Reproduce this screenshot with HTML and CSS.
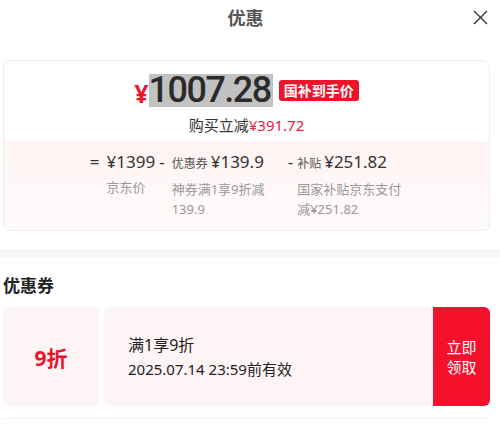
FILE: index.html
```html
<!DOCTYPE html>
<html lang="zh-CN">

<head>
  <meta charset="utf-8">
  <title>优惠</title>
  <link rel="stylesheet" href="styles.css">
</head>

<body>
  <div class="sheet">
    <div class="sheet-head">
      <span></span>
      <h1>优惠</h1>
      <button type="button" class="btn-close" aria-label="关闭">
        <svg width="15" height="15" viewBox="0 0 15 15">
          <path d="M1 1 L14 14 M14 1 L1 14" stroke="#333" stroke-width="1.4" fill="none" />
        </svg>
      </button>
    </div>

    <div class="price-card">
      <div class="price-top">
        <div class="price-line">
          <span class="yen">¥</span><span class="final">1007.28</span>
          <span class="badge">国补到手价</span>
        </div>
        <div class="save">购买立减<em>¥391.72</em></div>
      </div>
      <div class="price-calc">
        <div class="calc-col">
          <span class="op">=</span>
          <div class="calc-body">
            <div class="calc-price">¥1399</div>
            <div class="calc-desc">京东价</div>
          </div>
        </div>
        <div class="calc-col">
          <span class="op">-</span>
          <div class="calc-body w-coupon">
            <div class="calc-price"><small>优惠券</small>¥139.9</div>
            <div class="calc-desc">神券满1享9折减139.9</div>
          </div>
        </div>
        <div class="calc-col">
          <span class="op op-last">-</span>
          <div class="calc-body w-subsidy">
            <div class="calc-price"><small>补贴</small>¥251.82</div>
            <div class="calc-desc">国家补贴京东支付减¥251.82</div>
          </div>
        </div>
      </div>
    </div>
  </div>

  <div class="band"></div>

  <div class="sheet">
    <h2 class="sec-title">优惠券</h2>
    <div class="coupon">
      <div class="coupon-value">9折</div>
      <div class="coupon-info">
        <div class="coupon-name">满1享9折</div>
        <div>2025.07.14 23:59前有效</div>
      </div>
      <button type="button" class="coupon-btn">立即<br>领取</button>
    </div>
    <div class="divider"></div>
  </div>
</body>

</html>
```

FILE: styles.css
```css
html,
body {
  margin: 0;
  padding: 0;
  background: #fff;
}

body {
  font-family: "Noto Sans", "Noto Sans CJK SC", sans-serif;
  color: #333;
}

h1,
h2 {
  margin: 0;
}

button {
  font-family: inherit;
  border: none;
  cursor: pointer;
}

.sheet {
  padding: 0 10px 0 3px;
}

.sheet-head {
  display: grid;
  grid-template-columns: 1fr auto 1fr;
  align-items: center;
  height: 35px;
  margin-bottom: 25px;
  padding-right: 2px;
}

.sheet-head h1 {
  font-size: 18px;
  line-height: 24px;
  color: #555;
}

.btn-close {
  justify-self: end;
  background: none;
  padding: 0;
  width: 15px;
  height: 15px;
  line-height: 0;
}

/* 가격 카드 */
.price-card {
  border: 1px solid #eee;
  border-radius: 7px;
  overflow: hidden;
}

.price-top {
  padding: 12px 0 4px;
  text-align: center;
}

.price-line {
  display: flex;
  justify-content: center;
  align-items: center;
  height: 34px;
}

.yen {
  color: #f0142d;
  font-size: 25px;
  font-weight: 700;
  padding-top: 6px;
}

.final {
  display: inline-block;
  height: 33px;
  line-height: 33px;
  background: #c2c2c2;
  font-family: Roboto, "Noto Sans", sans-serif;
  font-size: 36px;
  font-weight: 500;
  letter-spacing: -1.5px;
  color: #2b2b2b;
  padding-right: 2px;
}

.badge {
  margin-left: 6px;
  background: #f0142a;
  color: #fff;
  font-size: 14px;
  font-weight: 700;
  line-height: 21px;
  padding: 0 5px;
  border-radius: 3px;
}

.save {
  margin-top: 6px;
  font-size: 15px;
  line-height: 24px;
}

.save em {
  font-style: normal;
  color: #e8213b;
}

.price-calc {
  display: flex;
  justify-content: center;
  gap: 4px;
  padding: 11px 0 11px 4px;
  background: linear-gradient(#fff4f4, #fffbfb);
}

.calc-col {
  display: flex;
}

.op {
  font-size: 17px;
  line-height: 20px;
  margin-right: 7px;
}

.op-last {
  margin-right: 4px;
}

.calc-price {
  font-size: 17px;
  line-height: 20px;
  white-space: nowrap;
}

.calc-price small {
  font-size: 12px;
  color: #555;
  margin-right: 3px;
}

.calc-desc {
  margin-top: 5px;
  font-size: 13px;
  line-height: 20px;
  color: #999;
}

.w-coupon {
  width: 112px;
}

.w-subsidy {
  width: 110px;
}

.band {
  height: 9px;
  margin-top: 18px;
  background: #f7f7fa;
}

.sec-title {
  margin-top: 16px;
  font-size: 17px;
  line-height: 24px;
  color: #222;
}

/* 쿠폰 */
.coupon {
  display: flex;
  height: 99px;
  margin-top: 9px;
  gap: 5px;
}

.coupon-value {
  width: 96px;
  display: flex;
  align-items: center;
  justify-content: center;
  background: #fdf4f5;
  border-radius: 6px;
  color: #e8152f;
  font-size: 21px;
  font-weight: 700;
}

.coupon-info {
  flex: 1;
  display: flex;
  flex-direction: column;
  justify-content: center;
  padding-left: 24px;
  background: #fdf4f5;
  border-radius: 6px 0 0 6px;
  font-size: 15px;
  line-height: 24px;
  color: #222;
}

.coupon-name {
  font-size: 16px;
}

.coupon-btn {
  width: 57px;
  margin-left: -5px;
  background: #f5102b;
  color: #fff;
  font-size: 15px;
  line-height: 20px;
  border-radius: 0 6px 6px 0;
  padding: 0;
}

.divider {
  height: 1px;
  margin-top: 12px;
  background: #f0f0f0;
}
```
